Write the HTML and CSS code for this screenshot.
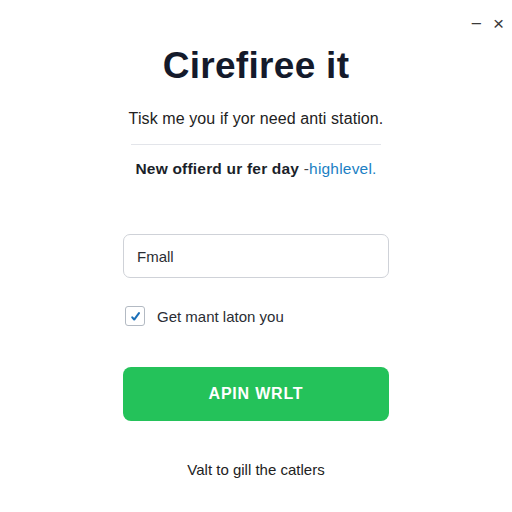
FILE: index.html
```html
<!DOCTYPE html>
<html lang="en">
<head>
<meta charset="utf-8">
<title>Cirefiree it</title>
<link rel="stylesheet" href="styles.css">
</head>
<body>
<div class="window">
  <div class="window-controls">
    <span class="ctl ctl-min">&minus;</span>
    <span class="ctl ctl-close">&times;</span>
  </div>
  <main class="panel">
    <h1 class="title">Cirefiree it</h1>
    <p class="subtitle">Tisk me you if yor need anti station.</p>
    <hr class="divider">
    <p class="offer">New offierd ur fer day <span class="dash">-</span><a class="offer-link" href="#">highlevel.</a></p>
    <form class="signup">
      <div class="field">
        <span class="field-label">Fmall</span>
      </div>
      <label class="check">
        <span class="box">
          <svg width="13" height="13" viewBox="0 0 12 12"><path d="M3 6.8 L4.8 8.8 L9.2 2.8" fill="none" stroke="#1a6fb8" stroke-width="1.9" stroke-linecap="round" stroke-linejoin="round"/></svg>
        </span>
        <span class="check-text">Get mant laton you</span>
      </label>
      <button type="button" class="cta">APIN WRLT</button>
    </form>
    <p class="footer">Valt to gill the catlers</p>
  </main>
</div>
</body>
</html>
```

FILE: styles.css
```css
html, body {
  margin: 0;
  padding: 0;
  background: #ffffff;
}

body {
  font-family: "Liberation Sans", Arial, sans-serif;
  color: #1b1f2a;
  width: 512px;
  height: 512px;
  overflow: hidden;
}

.window {
  position: relative;
  width: 512px;
  height: 512px;
}

.window-controls {
  position: absolute;
  top: 12px;
  right: 8px;
  display: flex;
  gap: 11px;
  font-size: 19px;
  color: #3a3a3a;
}

.ctl {
  display: block;
  line-height: 24px;
}

.panel {
  width: 266px;
  margin: 0 auto;
  padding-top: 44px;
  display: flex;
  flex-direction: column;
  align-items: center;
}

.title {
  margin: 0;
  font-size: 37px;
  font-weight: 700;
  color: #141a2b;
  line-height: 44px;
  letter-spacing: 0.3px;
}

.subtitle {
  margin: 21px 0 0;
  font-size: 16px;
  color: #222;
  line-height: 20px;
  letter-spacing: 0.1px;
}

.divider {
  width: 250px;
  border: 0;
  border-top: 1px solid #e3e5ea;
  margin: 15px 0 0;
}

.offer {
  margin: 14px 0 0;
  font-size: 15.5px;
  font-weight: 700;
  color: #1b1f2a;
  line-height: 20px;
  letter-spacing: 0.2px;
}

.dash {
  font-weight: 400;
  color: #444;
}

.offer-link {
  color: #1b7fc4;
  font-weight: 400;
  text-decoration: none;
}

.signup {
  width: 100%;
  margin-top: 55px;
  display: flex;
  flex-direction: column;
}

.field {
  height: 42px;
  border: 1px solid #cfd2d8;
  border-radius: 7px;
  display: flex;
  align-items: center;
  padding: 0 13px;
}

.field-label {
  font-size: 15px;
  color: #2a2d33;
}

.check {
  margin-top: 28px;
  display: flex;
  align-items: center;
  gap: 12px;
  padding-left: 2px;
}

.box {
  width: 18px;
  height: 18px;
  border: 1px solid #b3bac3;
  border-radius: 3px;
  display: flex;
  align-items: center;
  justify-content: center;
}

.check-text {
  font-size: 15px;
  color: #2a2d33;
}

.cta {
  margin-top: 41px;
  height: 54px;
  border: 0;
  border-radius: 8px;
  background: #24c25a;
  color: #ffffff;
  font-family: "Liberation Sans", Arial, sans-serif;
  font-size: 16px;
  font-weight: 700;
  letter-spacing: 0.8px;
}

.footer {
  margin: 40px 0 0;
  font-size: 15px;
  color: #222;
}
```
